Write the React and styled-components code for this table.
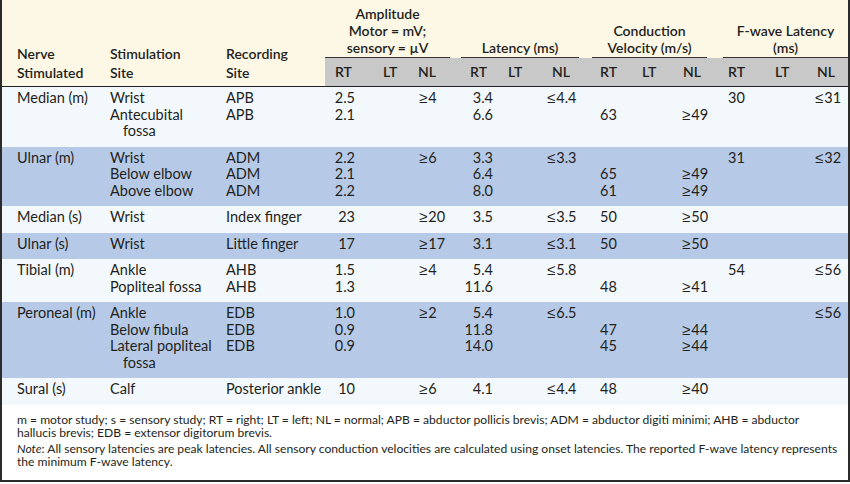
import React from 'react';
import styled, { createGlobalStyle } from 'styled-components';

const GlobalStyle = createGlobalStyle`
  html, body {
    margin: 0;
    padding: 0;
    background: #ffffff;
  }
  body {
    font-family: Lato, "Open Sans", "DejaVu Sans", sans-serif;
    color: #231f20;
  }
`;

// column widths and text offsets, measured off the printed table
const cols = [
  { w: 106, hp: 15, dp: 15 },
  { w: 116, hp: 2, dp: 2 },
  { w: 101, hp: 2, dp: 2 },
  { w: 53, hp: 10, dp: 0, pr: 23, right: true },
  { w: 34, hp: 5, dp: 5 },
  { w: 49, hp: 6, dp: 7 },
  { w: 39, hp: 9, dp: 0, pr: 7, right: true },
  { w: 45, hp: 8, dp: 8 },
  { w: 47, hp: 7, dp: 2 },
  { w: 43, hp: 8, dp: 8 },
  { w: 42, hp: 7, dp: 7 },
  { w: 46, hp: 6, dp: 5 },
  { w: 45, hp: 5, dp: 5 },
  { w: 42, hp: 7, dp: 7 },
  { w: 38, hp: 7, dp: 5 },
];

const groups = [
  { label: ['Amplitude', 'Motor = mV;', 'sensory = µV'], inset: 11 },
  { label: ['Latency (ms)'], inset: 13 },
  { label: ['Conduction', 'Velocity (m/s)'], inset: 16 },
  { label: ['F-wave Latency', '(ms)'], inset: 0 },
];

const nerves = [
  {
    name: 'Median (m)',
    tone: 'light',
    rows: [
      { site: ['Wrist'], rec: 'APB', v: ['2.5', '', '≥4', '3.4', '', '≤4.4', '', '', '', '30', '', '≤31'] },
      { site: ['Antecubital', 'fossa'], rec: 'APB', v: ['2.1', '', '', '6.6', '', '', '63', '', '≥49', '', '', ''] },
    ],
  },
  {
    name: 'Ulnar (m)',
    tone: 'blue',
    rows: [
      { site: ['Wrist'], rec: 'ADM', v: ['2.2', '', '≥6', '3.3', '', '≤3.3', '', '', '', '31', '', '≤32'] },
      { site: ['Below elbow'], rec: 'ADM', v: ['2.1', '', '', '6.4', '', '', '65', '', '≥49', '', '', ''] },
      { site: ['Above elbow'], rec: 'ADM', v: ['2.2', '', '', '8.0', '', '', '61', '', '≥49', '', '', ''] },
    ],
  },
  {
    name: 'Median (s)',
    tone: 'light',
    rows: [
      { site: ['Wrist'], rec: 'Index finger', v: ['23', '', '≥20', '3.5', '', '≤3.5', '50', '', '≥50', '', '', ''] },
    ],
  },
  {
    name: 'Ulnar (s)',
    tone: 'blue',
    rows: [
      { site: ['Wrist'], rec: 'Little finger', v: ['17', '', '≥17', '3.1', '', '≤3.1', '50', '', '≥50', '', '', ''] },
    ],
  },
  {
    name: 'Tibial (m)',
    tone: 'light',
    rows: [
      { site: ['Ankle'], rec: 'AHB', v: ['1.5', '', '≥4', '5.4', '', '≤5.8', '', '', '', '54', '', '≤56'] },
      { site: ['Popliteal fossa'], rec: 'AHB', v: ['1.3', '', '', '11.6', '', '', '48', '', '≥41', '', '', ''] },
    ],
  },
  {
    name: 'Peroneal (m)',
    tone: 'blue',
    rows: [
      { site: ['Ankle'], rec: 'EDB', v: ['1.0', '', '≥2', '5.4', '', '≤6.5', '', '', '', '', '', '≤56'] },
      { site: ['Below fibula'], rec: 'EDB', v: ['0.9', '', '', '11.8', '', '', '47', '', '≥44', '', '', ''] },
      { site: ['Lateral popliteal', 'fossa'], rec: 'EDB', v: ['0.9', '', '', '14.0', '', '', '45', '', '≥44', '', '', ''] },
    ],
  },
  {
    name: 'Sural (s)',
    tone: 'light',
    rows: [
      { site: ['Calf'], rec: 'Posterior ankle', v: ['10', '', '≥6', '4.1', '', '≤4.4', '48', '', '≥40', '', '', ''] },
    ],
  },
];

const tones = {
  light: '#f3f8fc',
  blue: '#b6cae7',
};

// ≥ / ≤ are set in a face whose comparison signs sit at figure height
function Value({ text }) {
  if (text && (text[0] === '≥' || text[0] === '≤')) {
    return (
      <>
        <Sym>{text[0]}</Sym>
        {text.slice(1)}
      </>
    );
  }
  return text;
}

function App() {
  return (
    <>
      <GlobalStyle />
      <Frame>
        <Table>
          <colgroup>
            {cols.map((c, i) => (
              <col key={i} style={{ width: c.w }} />
            ))}
          </colgroup>
          <Head>
            <tr>
              <HeadCell rowSpan={2} $pl={cols[0].hp}>Nerve<br />Stimulated</HeadCell>
              <HeadCell rowSpan={2} $pl={cols[1].hp}>Stimulation<br />Site</HeadCell>
              <HeadCell rowSpan={2} $pl={cols[2].hp}>Recording<br />Site</HeadCell>
              {groups.map((g) => (
                <GroupCell key={g.label[0]} colSpan={3}>
                  <GroupLabel $inset={g.inset}>
                    {g.label.map((l) => (
                      <div key={l}>{l}</div>
                    ))}
                  </GroupLabel>
                </GroupCell>
              ))}
            </tr>
            <tr>
              {cols.slice(3).map((c, i) => (
                <SubCell key={i} $pl={c.hp}>
                  {['RT', 'LT', 'NL'][i % 3]}
                </SubCell>
              ))}
            </tr>
          </Head>
          {nerves.map((n) => (
            <NerveGroup key={n.name} $tone={tones[n.tone]}>
              {n.rows.map((r, ri) => {
                const first = ri === 0;
                const last = ri === n.rows.length - 1;
                return (
                  <tr key={ri}>
                    <Cell $first={first} $last={last} $pl={cols[0].dp}>
                      {first ? n.name : ''}
                    </Cell>
                    <Cell $first={first} $last={last} $pl={cols[1].dp}>
                      {r.site.map((s, si) => (
                        <SiteLine key={si} $cont={si > 0}>{s}</SiteLine>
                      ))}
                    </Cell>
                    <Cell $first={first} $last={last} $pl={cols[2].dp}>{r.rec}</Cell>
                    {r.v.map((val, vi) => {
                      const c = cols[vi + 3];
                      return (
                        <Cell
                          key={vi}
                          $first={first}
                          $last={last}
                          $pl={c.dp}
                          $pr={c.pr || 0}
                          $right={c.right}
                        >
                          <Value text={val} />
                        </Cell>
                      );
                    })}
                  </tr>
                );
              })}
            </NerveGroup>
          ))}
        </Table>
        <Footnotes>
          <Note>
            <Line>m = motor study; s = sensory study; RT = right; LT = left; NL = normal; APB = abductor pollicis brevis; ADM = abductor digiti minimi; AHB = abductor</Line>
            <Line>hallucis brevis; EDB = extensor digitorum brevis.</Line>
          </Note>
          <Note>
            <Line><em>Note</em>: All sensory latencies are peak latencies. All sensory conduction velocities are calculated using onset latencies. The reported F-wave latency represents</Line>
            <Line>the minimum F-wave latency.</Line>
          </Note>
        </Footnotes>
      </Frame>
    </>
  );
}

export default App;

const Frame = styled.div`
  width: 850px;
  height: 482px;
  box-sizing: border-box;
  border: 2px solid #2b2b2b;
  border-top: none;
  background: #ffffff;
  display: flex;
  flex-direction: column;
  overflow: hidden;
`;

const Table = styled.table`
  width: 846px;
  table-layout: fixed;
  border-collapse: collapse;
  border-spacing: 0;
  font-size: 14.5px;
`;

const Head = styled.thead`
  background: #fdf7e5;
  border-bottom: 1px solid #222222;
  font-size: 14px;
  th {
    font-weight: 600;
    text-align: left;
    padding: 0;
  }
`;

const HeadCell = styled.th`
  vertical-align: bottom;
  line-height: 19px;
  padding-left: ${(p) => p.$pl}px !important;
  padding-bottom: 4px !important;
  white-space: nowrap;
`;

const GroupCell = styled.th`
  height: 58px;
  vertical-align: bottom;
`;

const GroupLabel = styled.div`
  margin-right: ${(p) => p.$inset}px;
  padding-bottom: 1px;
  border-bottom: 1px solid #333333;
  text-align: center;
  line-height: 17px;
  white-space: nowrap;
`;

const SubCell = styled.th`
  height: 28px;
  background: #c8c8c8;
  line-height: 28px;
  padding-left: ${(p) => p.$pl}px !important;
`;

const NerveGroup = styled.tbody`
  background: ${(p) => p.$tone};
`;

const Cell = styled.td`
  vertical-align: top;
  line-height: 16.5px;
  height: 16.5px;
  white-space: nowrap;
  padding: ${(p) => (p.$first ? 3 : 0)}px ${(p) => p.$pr || 0}px ${(p) => (p.$last ? 7 : 0)}px ${(p) => p.$pl}px;
  text-align: ${(p) => (p.$right ? 'right' : 'left')};
`;

const Sym = styled.span`
  font-family: "Liberation Sans", "DejaVu Sans", sans-serif;
  font-size: 15px;
  line-height: 8px;
  margin-right: 1px;
`;

const SiteLine = styled.div`
  padding-left: ${(p) => (p.$cont ? 13 : 0)}px;
`;

const Footnotes = styled.div`
  flex: 1;
  background: #ffffff;
  padding: 8px 0 0 15px;
  font-size: 12.1px;
  line-height: 13.5px;
  display: flex;
  flex-direction: column;
  gap: 2px;
`;

const Note = styled.div`
  display: flex;
  flex-direction: column;
`;

const Line = styled.span`
  white-space: nowrap;
`;
